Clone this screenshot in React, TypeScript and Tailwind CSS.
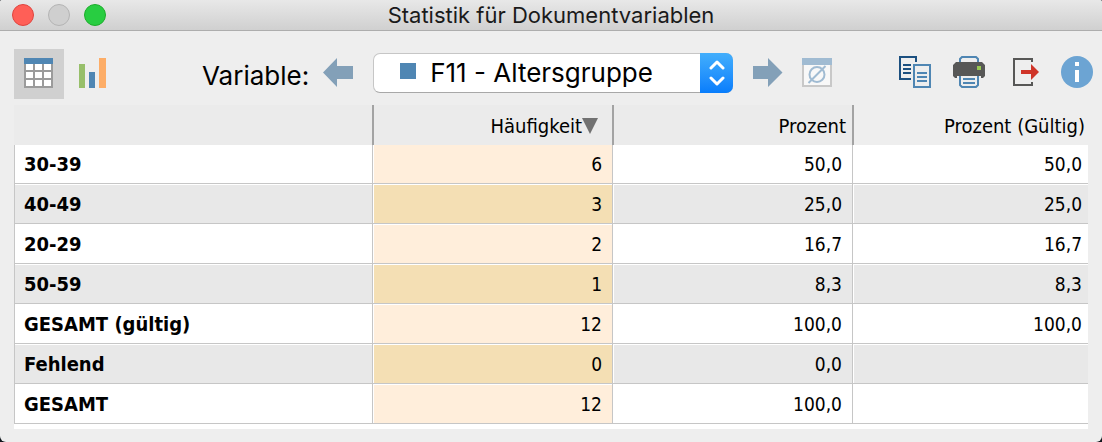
import { useState, type ReactNode } from 'react';
import clsx from 'clsx';

interface Row {
  label: string;
  count: string;
  percent: string;
  valid: string;
}

const rows: Row[] = [
  { label: '30-39', count: '6', percent: '50,0', valid: '50,0' },
  { label: '40-49', count: '3', percent: '25,0', valid: '25,0' },
  { label: '20-29', count: '2', percent: '16,7', valid: '16,7' },
  { label: '50-59', count: '1', percent: '8,3', valid: '8,3' },
  { label: 'GESAMT (gültig)', count: '12', percent: '100,0', valid: '100,0' },
  { label: 'Fehlend', count: '0', percent: '0,0', valid: '' },
  { label: 'GESAMT', count: '12', percent: '100,0', valid: '' },
];

function Icon({ children }: { children: ReactNode }) {
  return (
    <svg viewBox="0 0 32 32" className="block h-8 w-8 shrink-0" fill="none" aria-hidden="true">
      {children}
    </svg>
  );
}

interface ToolButtonProps {
  label: string;
  className?: string;
  pressed?: boolean;
  disabled?: boolean;
  onClick?: () => void;
  children: ReactNode;
}

function ToolButton({ label, className, pressed, disabled, onClick, children }: ToolButtonProps) {
  return (
    <button
      type="button"
      aria-label={label}
      aria-pressed={pressed}
      disabled={disabled}
      onClick={onClick}
      className={clsx(
        'flex h-[50px] shrink-0 items-start justify-center pt-[7px]',
        pressed && 'bg-[#d0d0d0]',
        className ?? 'w-8'
      )}
    >
      <Icon>{children}</Icon>
    </button>
  );
}

function TitleBar() {
  return (
    <header className="grid h-[31px] grid-cols-[1fr_auto_1fr] items-center border-b border-[#adadad] bg-linear-to-b from-[#e8e8e8] to-[#d0d0d0] px-3">
      <div className="flex gap-[14px]">
        <button type="button" aria-label="Schließen" className="h-[22px] w-[22px] rounded-full border border-[#e0443e] bg-[#ff5f57]" />
        <button type="button" aria-label="Minimieren" disabled className="h-[22px] w-[22px] rounded-full border border-[#b4b4b4] bg-[#cfcfcf]" />
        <button type="button" aria-label="Vergrößern" className="h-[22px] w-[22px] rounded-full border border-[#1dad2b] bg-[#28cd41]" />
      </div>
      <h1 className="font-[Inter,sans-serif] text-[22px] leading-7 text-[#1a1a1a]">Statistik für Dokumentvariablen</h1>
    </header>
  );
}

function Toolbar() {
  const [view, setView] = useState('table');

  return (
    <div className="flex items-start pt-[18px] pr-[9px] pb-[6px] pl-[14px]">
      <ToolButton label="Tabelle" className="w-[50px]" pressed={view === 'table'} onClick={() => setView('table')}>
        <path fill="#9b9b9b" d="M1 8h29v24H1z" />
        <path fill="#4f86b3" d="M1 2h29v6H1z" />
        <path
          fill="#fff"
          d="M3 8h7v6H3zM12 8h7v6h-7zM21 8h7v6h-7zM3 16h7v6H3zM12 16h7v6h-7zM21 16h7v6h-7zM3 24h7v6H3zM12 24h7v6h-7zM21 24h7v6h-7z"
        />
      </ToolButton>
      <ToolButton label="Diagramm" className="w-[58px]" pressed={view === 'chart'} onClick={() => setView('chart')}>
        <path fill="#97bf6a" d="M2 8h6v24H2z" />
        <path fill="#4f86b3" d="M12 16h6v16h-6z" />
        <path fill="#fdad67" d="M22 2h7v30h-7z" />
      </ToolButton>

      <div className="ml-20 flex items-start">
        <label htmlFor="variable" className="mr-[13px] pt-[9px] font-[Inter,sans-serif] text-[26px] leading-9 text-black">
          Variable:
        </label>
        <ToolButton label="Vorherige Variable">
          <path fill="#83a0b8" d="M1 16.5 15 2v8h16v13H15v8z" />
        </ToolButton>
        <div className="relative mx-[19px] mt-1 w-[360px]">
          <select
            id="variable"
            className="h-10 w-full appearance-none rounded-[7px] border border-[#c6c6c6] border-b-[#a8a8a8] bg-white pl-14 font-[Inter,sans-serif] text-[26px] leading-9 text-black"
          >
            <option>F11 - Altersgruppe</option>
          </select>
          <span className="pointer-events-none absolute top-[10px] left-[27px] h-4 w-4 bg-[#4f86b3]" />
          <span className="pointer-events-none absolute inset-y-0 right-0 flex w-[33px] items-center justify-center rounded-r-[7px] bg-linear-to-b from-[#42aefc] to-[#077dfc]">
            <svg viewBox="0 0 16 26" className="h-[26px] w-4" fill="none" stroke="#fff" strokeWidth="3" strokeLinecap="round" strokeLinejoin="round" aria-hidden="true">
              <path d="m2 8 6-6 6 6M2 18l6 6 6-6" />
            </svg>
          </span>
        </div>
        <ToolButton label="Nächste Variable">
          <path fill="#83a0b8" d="M30.500 16.500 16 2v8H1v13h15v8z" />
        </ToolButton>
        <ToolButton label="Fehlende Werte" className="ml-[17px] w-8" disabled>
          <path fill="#f8f8f8" stroke="#c8c8c8" strokeWidth="2" d="M2 3h28v27H2z" />
          <path fill="#a0bbd2" d="M1 2h30v7H1z" />
          <circle cx="16" cy="18.500" r="7.500" stroke="#a0bbd2" strokeWidth="2" />
          <path stroke="#a0bbd2" strokeWidth="2" d="m7.500 27 17-17" />
        </ToolButton>
      </div>

      <div className="ml-auto flex items-start gap-[22px]">
        <ToolButton label="Kopieren">
          <path stroke="#1c5080" strokeWidth="2" d="M17 6V1H1v22h11M4 9h8M4 13h8M4 17h8" />
          <path stroke="#4f86b3" strokeWidth="2" d="M15 9h16v22H15zM18 17h10M18 21h10M18 25h10" />
        </ToolButton>
        <ToolButton label="Drucken">
          <path stroke="#4f86b3" strokeWidth="2" d="M7 7V3l2-2h14l2 2v4" />
          <path fill="#575756" d="M3 6h26l3 3v11l-2 2h-2v-2H4v2H2l-2-2V9z" />
          <path fill="#97c953" d="M24 10h4v4h-4z" />
          <path stroke="#4f86b3" strokeWidth="2" d="M7 20v9l2 2h14l2-2v-9M10 23h12M10 27h12" />
        </ToolButton>
        <ToolButton label="Exportieren">
          <path stroke="#575756" strokeWidth="2" d="M25 6V3H7v26h18v-3" />
          <path fill="#cf3428" d="M14 14h10V8l8 8-8 8v-6H14z" />
        </ToolButton>
        <ToolButton label="Info">
          <circle cx="16" cy="16" r="16" fill="#6ca4d3" />
          <path fill="#fff" d="M14 6h4v4h-4zM14 14h4v12h-4z" />
        </ToolButton>
      </div>
    </div>
  );
}

function StatsTable() {
  return (
    <div className="mx-[14px] bg-white pb-[5px]">
      <table className="w-full table-fixed border-separate border-spacing-0 font-['DejaVu_Sans_Condensed','DejaVu_Sans',sans-serif] text-[19px] leading-6 text-black">
        <colgroup>
          <col />
          <col className="w-60" />
          <col className="w-60" />
          <col className="w-[236px]" />
        </colgroup>
        <thead className="text-[20px] leading-6">
          <tr className="h-10 bg-[#ebebeb] text-right">
            <td />
            <th scope="col" aria-sort="descending" className="border-l-2 border-[#a3a3a3] pt-[2px] pr-[14px] font-normal">
              <button type="button" className="inline-flex items-center">
                Häufigkeit
                <svg viewBox="0 0 16 16" className="h-4 w-4" aria-hidden="true">
                  <path fill="#717171" d="M0 0h16L8 16z" />
                </svg>
              </button>
            </th>
            <th scope="col" className="border-l-2 border-[#a3a3a3] pt-[2px] pr-[6px] font-normal">
              Prozent
            </th>
            <th scope="col" className="border-l-2 border-[#a3a3a3] bg-[#eeeeee] pt-[2px] pr-[3px] font-normal">
              Prozent (Gültig)
            </th>
          </tr>
        </thead>
        <tbody>
          {rows.map((row, idx) => {
            const odd = idx % 2 === 1;
            const cell = clsx('border-b border-l border-[#c6c6c6] p-0', idx > 0 && 'pt-px');
            const fill = odd ? 'bg-[#e8e8e8]' : 'bg-white';
            return (
              <tr key={row.label} className="text-right">
                <th scope="row" className={clsx(cell, 'text-left text-[20px] leading-6 font-bold')}>
                  <div className={clsx('h-[38px] py-[7px] pl-[9px]', fill)}>{row.label}</div>
                </th>
                <td className={clsx(cell, 'pl-px')}>
                  <div className={clsx('h-[38px] py-[7px] pr-[10px]', odd ? 'bg-[#f4dfb4]' : 'bg-[#ffeedb]')}>{row.count}</div>
                </td>
                <td className={clsx(cell, 'pl-px')}>
                  <div className={clsx('h-[38px] py-[7px] pr-[10px]', fill)}>{row.percent}</div>
                </td>
                <td className={clsx(cell, 'pl-px')}>
                  <div className={clsx('h-[38px] py-[7px] pr-[6px]', fill)}>{row.valid}</div>
                </td>
              </tr>
            );
          })}
        </tbody>
      </table>
    </div>
  );
}

export default function App() {
  return (
    <div className="min-h-screen bg-[#10161c]">
      <main className="min-h-screen overflow-hidden rounded-t-[2px] rounded-b-[6px] bg-[#eeeeee]">
        <TitleBar />
        <Toolbar />
        <StatsTable />
      </main>
    </div>
  );
}
